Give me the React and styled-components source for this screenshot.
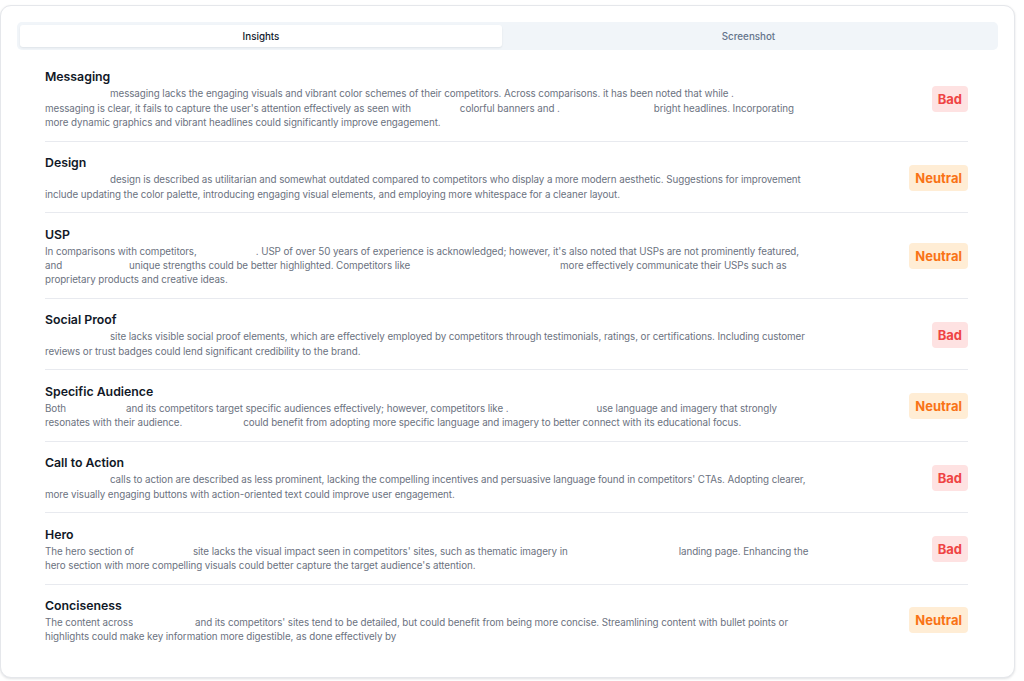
import React from "react";
import styled, { createGlobalStyle } from "styled-components";

const Global = createGlobalStyle`
  html, body { margin: 0; padding: 0; background: #ffffff; }
  body { font-family: Inter, "Noto Sans", "Liberation Sans", sans-serif; -webkit-font-smoothing: antialiased; }
  * { box-sizing: border-box; }
`;

const Card = styled.div`
  margin: 5px 9px 3px 0;
  background: #ffffff;
  border: 1px solid #e5e7eb;
  border-radius: 11px;
  box-shadow: 0 1px 3px rgba(15, 23, 42, 0.08), 0 1px 2px rgba(15, 23, 42, 0.05);
  padding: 16px 16px 22px 16px;
`;

const TabList = styled.div`
  display: grid;
  grid-template-columns: 482px 1fr;
  height: 28px;
  padding: 3px;
  background: #f1f5f9;
  border-radius: 5px;
`;

const Tab = styled.div`
  display: flex;
  align-items: center;
  justify-content: center;
  border-radius: 3px;
  font-size: 9.8px;
  font-weight: 500;
  color: ${(p) => (p.$active ? "#0f172a" : "#64748b")};
  background: ${(p) => (p.$active ? "#ffffff" : "transparent")};
  box-shadow: ${(p) => (p.$active ? "0 1px 2px rgba(15,23,42,0.08)" : "none")};
`;

const List = styled.div`
  margin-top: 6px;
  padding: 0 30px 0 28px;
`;

const Row = styled.div`
  display: flex;
  align-items: center;
  justify-content: space-between;
  padding: 11.3px 0 10.3px;
  border-bottom: ${(p) => (p.$last ? "none" : "1px solid #e8eaef")};
`;

const Body = styled.div`
  flex: 1;
  min-width: 0;
`;

const Title = styled.div`
  font-size: 12.3px;
  line-height: 20px;
  font-weight: 600;
  color: #111827;
`;

const Desc = styled.div`
  font-size: 9.8px;
  line-height: 14.4px;
  letter-spacing: -0.07px;
  color: #6b7280;
  white-space: nowrap;
`;

const Redacted = styled.span`
  display: inline-block;
  width: ${(p) => p.$w}px;
  height: 1em;
`;

const Badge = styled.span`
  flex: none;
  padding: 3px 6px;
  border-radius: 4px;
  font-size: 13px;
  line-height: 20px;
  font-weight: 700;
  color: ${(p) => (p.$status === "Bad" ? "#ef4444" : "#f97316")};
  background: ${(p) => (p.$status === "Bad" ? "#fee2e2" : "#ffedd5")};
`;

const items = [
  {
    title: "Messaging",
    status: "Bad",
    lines: [
      [65, "messaging lacks the engaging visuals and vibrant color schemes of their competitors. Across comparisons. it has been noted that while ."],
      ["messaging is clear, it fails to capture the user's attention effectively as seen with", 49, "colorful banners and .", 94, "bright headlines. Incorporating"],
      ["more dynamic graphics and vibrant headlines could significantly improve engagement."],
    ],
  },
  {
    title: "Design",
    status: "Neutral",
    lines: [
      [65, "design is described as utilitarian and somewhat outdated compared to competitors who display a more modern aesthetic. Suggestions for improvement"],
      ["include updating the color palette, introducing engaging visual elements, and employing more whitespace for a cleaner layout."],
    ],
  },
  {
    title: "USP",
    status: "Neutral",
    lines: [
      ["In comparisons with competitors,", 59, ". USP of over 50 years of experience is acknowledged; however, it's also noted that USPs are not prominently featured,"],
      ["and", 67, "unique strengths could be better highlighted. Competitors like", 150, "more effectively communicate their USPs such as"],
      ["proprietary products and creative ideas."],
    ],
  },
  {
    title: "Social Proof",
    status: "Bad",
    lines: [
      [65, "site lacks visible social proof elements, which are effectively employed by competitors through testimonials, ratings, or certifications. Including customer"],
      ["reviews or trust badges could lend significant credibility to the brand."],
    ],
  },
  {
    title: "Specific Audience",
    status: "Neutral",
    lines: [
      ["Both", 60, "and its competitors target specific audiences effectively; however, competitors like .", 88, "use language and imagery that strongly"],
      ["resonates with their audience.", 61, "could benefit from adopting more specific language and imagery to better connect with its educational focus."],
    ],
  },
  {
    title: "Call to Action",
    status: "Bad",
    lines: [
      [65, "calls to action are described as less prominent, lacking the compelling incentives and persuasive language found in competitors' CTAs. Adopting clearer,"],
      ["more visually engaging buttons with action-oriented text could improve user engagement."],
    ],
  },
  {
    title: "Hero",
    status: "Bad",
    lines: [
      ["The hero section of", 59, "site lacks the visual impact seen in competitors' sites, such as thematic imagery in", 111, "landing page. Enhancing the"],
      ["hero section with more compelling visuals could better capture the target audience's attention."],
    ],
  },
  {
    title: "Conciseness",
    status: "Neutral",
    lines: [
      ["The content across", 62, "and its competitors' sites tend to be detailed, but could benefit from being more concise. Streamlining content with bullet points or"],
      ["highlights could make key information more digestible, as done effectively by"],
    ],
  },
];

function Line({ segs }) {
  return (
    <>
      {segs.map((s, i) =>
        typeof s === "number" ? <Redacted key={i} $w={s} /> : <React.Fragment key={i}>{s}</React.Fragment>
      )}
    </>
  );
}

export default function App() {
  return (
    <>
      <Global />
      <Card>
        <TabList>
          <Tab $active>Insights</Tab>
          <Tab>Screenshot</Tab>
        </TabList>
        <List>
          {items.map((it, idx) => (
            <Row key={it.title} $last={idx === items.length - 1}>
              <Body>
                <Title>{it.title}</Title>
                <Desc>
                  {it.lines.map((l, i) => (
                    <React.Fragment key={i}>
                      <Line segs={l} />
                      {i < it.lines.length - 1 && <br />}
                    </React.Fragment>
                  ))}
                </Desc>
              </Body>
              <Badge $status={it.status}>{it.status}</Badge>
            </Row>
          ))}
        </List>
      </Card>
    </>
  );
}
